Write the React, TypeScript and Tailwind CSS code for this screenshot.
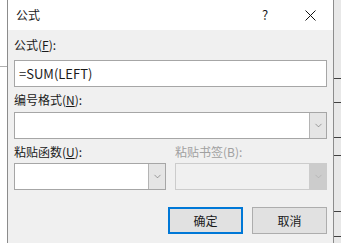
import { ChevronDown } from "lucide-react";

const font = { fontFamily: '"Noto Sans CJK SC", "Microsoft YaHei", sans-serif' };

function Select({ disabled = false, className = "" }: { disabled?: boolean; className?: string }) {
  return (
    <div
      className={`flex h-[27px] border ${
        disabled ? "border-[#cccccc] bg-[#f0f0f0]" : "border-[#a6a6a6] bg-white"
      } ${className}`}
    >
      <div className="flex-1" />
      <div
        className={`flex w-[17px] items-center justify-center border-l ${
          disabled ? "border-[#cccccc] bg-[#cccccc] text-[#a8a8a8]" : "border-[#b4b4b4] bg-[#e5e5e5] text-[#606060]"
        }`}
      >
        <ChevronDown size={11} strokeWidth={1.25} />
      </div>
    </div>
  );
}

export default function App() {
  return (
    <div className="flex h-[243px] w-[341px] overflow-hidden bg-white text-[12px] text-[#1a1a1a]" style={font}>
      {/* 左側の文書 */}
      <div className="flex w-[7px] flex-col bg-white">
        <div className="mt-[66px] h-px bg-[#b0b0b0]" />
      </div>

      {/* ダイアログ */}
      <div className="flex w-[327px] flex-col border-x border-[#8c8c8c] bg-[#f0f0f0]">
        <div className="flex h-[30px] items-center bg-white pl-[8px] leading-[16px]">
          <span className="flex-1">公式</span>
          <span className="w-[20px] text-[13px]">?</span>
          <svg className="mr-[17px] ml-[23px]" width="11" height="11" viewBox="0 0 11 11">
            <path d="M0.5 0.5 L10.5 10.5 M10.5 0.5 L0.5 10.5" stroke="#111" strokeWidth="1" fill="none" />
          </svg>
        </div>

        <div className="flex flex-col px-[6px] leading-[16px]">
          <div className="mt-[7px]">
            公式(<span className="underline">F</span>):
          </div>
          <div className="mt-[7px] flex h-[27px] items-center border border-[#a6a6a6] bg-white pl-[4px] text-[13px]">
            =SUM(LEFT)
          </div>

          <div className="mt-[5px]">
            编号格式(<span className="underline">N</span>):
          </div>
          <Select className="mt-[4px]" />

          <div className="mt-[5px] flex">
            <div className="w-[161px]">
              粘贴函数(<span className="underline">U</span>):
            </div>
            <div className="text-[#a0a0a0]">粘贴书签(B):</div>
          </div>
          <div className="mt-[3px] flex gap-[9px]">
            <Select className="w-[152px]" />
            <Select disabled className="flex-1" />
          </div>

          <div className="mt-[17px] flex justify-end gap-[9px]">
            <button className="flex h-[27px] w-[75px] items-center justify-center border-2 border-[#0078d7] bg-[#e1e1e1]">
              确定
            </button>
            <button className="flex h-[27px] w-[75px] items-center justify-center border border-[#adadad] bg-[#e1e1e1]">
              取消
            </button>
          </div>
        </div>
      </div>

      {/* 右側の文書 */}
      <div className="flex w-[7px] flex-col bg-[#e8e8e8]">
        <div className="mt-[78px] h-px bg-[#404040]" />
        <div className="mt-[23px] h-px bg-[#404040]" />
        <div className="mt-[34px] h-px bg-[#404040]" />
        <div className="mt-[17px] h-px bg-[#404040]" />
        <div className="mt-[55px] h-px bg-[#404040]" />
        <div className="mt-[24px] h-px bg-[#404040]" />
      </div>
    </div>
  );
}
